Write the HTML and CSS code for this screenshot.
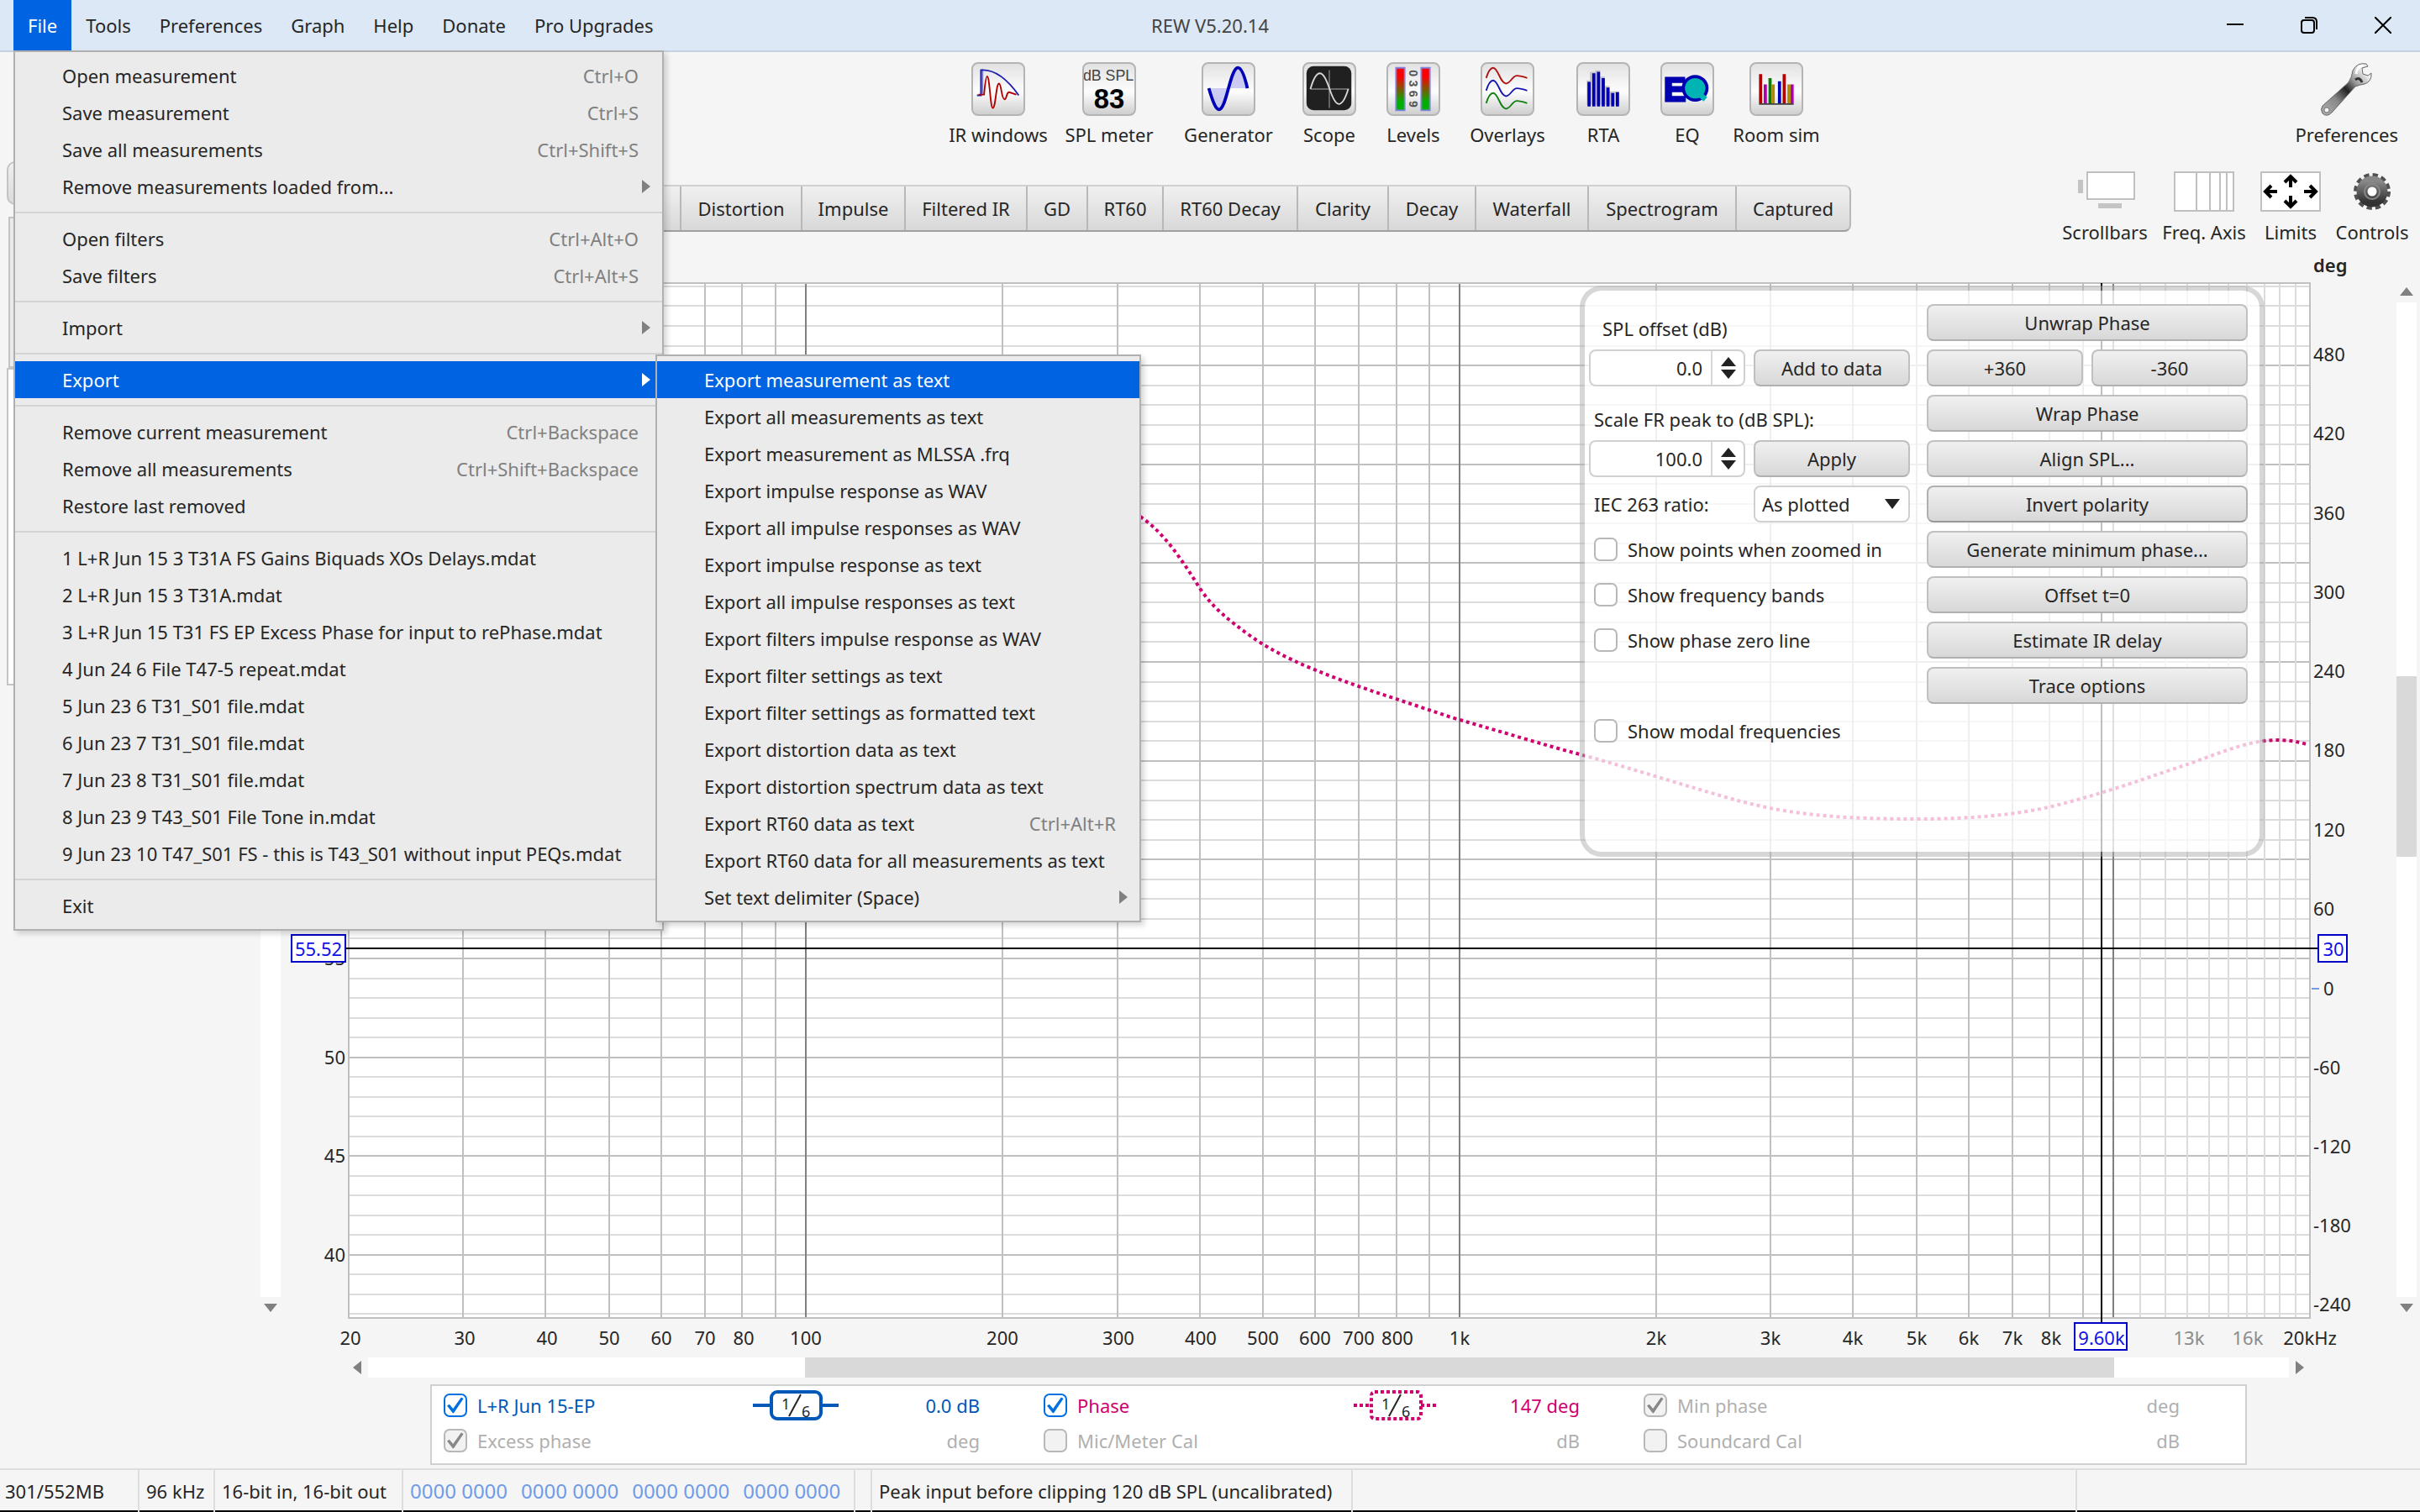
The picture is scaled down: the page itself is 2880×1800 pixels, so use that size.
FILE: index.html
```html
<!DOCTYPE html>
<html lang="en">
<head>
<meta charset="utf-8">
<title>REW V5.20.14</title>
<link rel="stylesheet" href="styles.css">
</head>
<body>
<header class="titlebar">
  <nav class="menubar">
    <div class="menu-host">
      <button class="menubar-item is-open">File</button>
      <ul class="menu">
        <li><button class="menu-item">Open measurement<kbd>Ctrl+O</kbd></button></li>
        <li><button class="menu-item">Save measurement<kbd>Ctrl+S</kbd></button></li>
        <li><button class="menu-item">Save all measurements<kbd>Ctrl+Shift+S</kbd></button></li>
        <li><button class="menu-item has-sub">Remove measurements loaded from...</button></li>
        <li class="separator"></li>
        <li><button class="menu-item">Open filters<kbd>Ctrl+Alt+O</kbd></button></li>
        <li><button class="menu-item">Save filters<kbd>Ctrl+Alt+S</kbd></button></li>
        <li class="separator"></li>
        <li><button class="menu-item has-sub">Import</button></li>
        <li class="separator"></li>
        <li class="sub-host">
          <button class="menu-item has-sub is-active">Export</button>
          <ul class="menu submenu">
            <li><button class="menu-item is-active">Export measurement as text</button></li>
            <li><button class="menu-item">Export all measurements as text</button></li>
            <li><button class="menu-item">Export measurement as MLSSA .frq</button></li>
            <li><button class="menu-item">Export impulse response as WAV</button></li>
            <li><button class="menu-item">Export all impulse responses as WAV</button></li>
            <li><button class="menu-item">Export impulse response as text</button></li>
            <li><button class="menu-item">Export all impulse responses as text</button></li>
            <li><button class="menu-item">Export filters impulse response as WAV</button></li>
            <li><button class="menu-item">Export filter settings as text</button></li>
            <li><button class="menu-item">Export filter settings as formatted text</button></li>
            <li><button class="menu-item">Export distortion data as text</button></li>
            <li><button class="menu-item">Export distortion spectrum data as text</button></li>
            <li><button class="menu-item">Export RT60 data as text<kbd>Ctrl+Alt+R</kbd></button></li>
            <li><button class="menu-item">Export RT60 data for all measurements as text</button></li>
            <li><button class="menu-item has-sub">Set text delimiter (Space)</button></li>
          </ul>
        </li>
        <li class="separator"></li>
        <li><button class="menu-item">Remove current measurement<kbd>Ctrl+Backspace</kbd></button></li>
        <li><button class="menu-item">Remove all measurements<kbd>Ctrl+Shift+Backspace</kbd></button></li>
        <li><button class="menu-item">Restore last removed</button></li>
        <li class="separator"></li>
        <li><button class="menu-item">1 L+R Jun 15 3 T31A FS Gains Biquads XOs Delays.mdat</button></li>
        <li><button class="menu-item">2 L+R Jun 15 3 T31A.mdat</button></li>
        <li><button class="menu-item">3 L+R Jun 15 T31 FS EP Excess Phase for input to rePhase.mdat</button></li>
        <li><button class="menu-item">4 Jun 24 6 File T47-5 repeat.mdat</button></li>
        <li><button class="menu-item">5 Jun 23 6 T31_S01 file.mdat</button></li>
        <li><button class="menu-item">6 Jun 23 7 T31_S01 file.mdat</button></li>
        <li><button class="menu-item">7 Jun 23 8 T31_S01 file.mdat</button></li>
        <li><button class="menu-item">8 Jun 23 9 T43_S01 File Tone in.mdat</button></li>
        <li><button class="menu-item">9 Jun 23 10 T47_S01 FS - this is T43_S01 without input PEQs.mdat</button></li>
        <li class="separator"></li>
        <li><button class="menu-item">Exit</button></li>
      </ul>
    </div>
    <button class="menubar-item">Tools</button>
    <button class="menubar-item">Preferences</button>
    <button class="menubar-item">Graph</button>
    <button class="menubar-item">Help</button>
    <button class="menubar-item">Donate</button>
    <button class="menubar-item">Pro Upgrades</button>
  </nav>
  <h1 class="window-title">REW V5.20.14</h1>
  <div class="window-controls">
    <button aria-label="Minimize"><svg width="20" height="20" viewBox="0 0 20 20"><path d="M0 9H20" stroke="#000" stroke-width="2"/></svg></button>
    <button aria-label="Restore"><svg width="20" height="20" viewBox="0 0 20 20" fill="none" stroke="#000" stroke-width="2"><rect x="1" y="4" width="15" height="15" rx="3"/><path d="M5 1H14Q19 1 19 6V15"/></svg></button>
    <button aria-label="Close"><svg width="20" height="20" viewBox="0 0 20 20"><path d="M0 0L20 20M20 0L0 20" stroke="#000" stroke-width="2"/></svg></button>
  </div>
</header>

<div class="toolbar">
  <div class="tools">
    <button class="tool"><svg class="tile" viewBox="0 0 64 64"><path d="M10 38V7H13V38Z" fill="#8080d8"/><path d="M5 40H10V8Q34 6 58 40" fill="none" stroke="#2020b0" stroke-width="2"/><path d="M7 39H14Q16 16 18 16C21 16 22 56 25 56C29 56 29 25 33 25C36 25 36 45 40 45C43 45 42 36 46 36Q49 37 55 39" fill="none" stroke="#b00000" stroke-width="2"/></svg>IR windows</button>
    <button class="tool"><svg class="tile" viewBox="0 0 64 64"><text x="31" y="21" class="tile-small">dB SPL</text><text x="32" y="57" class="tile-big">83</text></svg>SPL meter</button>
    <button class="tool"><svg class="tile" viewBox="0 0 64 64"><path d="M7 31C12 48 16 58 20 58C25 58 29 42 32 31ZM32 31C35 20 39 5 44 5C49 5 53 18 56 31Z" fill="#c0c0f0" opacity=".8"/><path d="M7 31C12 48 16 58 20 58C25 58 29 42 32 31C35 20 39 5 44 5C49 5 53 18 56 31" fill="none" stroke="#0000b8" stroke-width="4"/></svg>Generator</button>
    <button class="tool"><svg class="tile" viewBox="0 0 64 64"><rect x="3" y="3" width="57" height="56" rx="9" fill="#202020"/><path d="M32 8V56M8 32H57" stroke="#686868" stroke-width="2"/><path d="M8 32C12 18 16 12 20 12C25 12 29 22 32 31C36 43 40 51 44 51C49 51 53 42 56 32" fill="none" stroke="#d8d8d8" stroke-width="2"/></svg>Scope</button>
    <button class="tool"><svg class="tile" viewBox="0 0 64 64"><defs><linearGradient id="level" x1="0" y1="0" x2="0" y2="1"><stop offset=".2" stop-color="#f00"/><stop offset=".8" stop-color="#00b000"/></linearGradient></defs><path d="M10 5H21V59H10ZM42 5H53V59H42Z" fill="url(#level)" stroke="#8080e0" stroke-width="2"/><g class="tile-digit"><text transform="translate(27 12) rotate(90)">0</text><text transform="translate(27 25) rotate(90)">3</text><text transform="translate(27 38) rotate(90)">6</text><text transform="translate(27 51) rotate(90)">9</text></g></svg>Levels</button>
    <button class="tool"><svg class="tile" viewBox="0 0 64 64" fill="none" stroke-width="2"><path d="M5 18C8 8 11 5 14 5C20 5 23 25 30 25C36 25 38 15 44 15Q49 15 57 18" stroke="#b01010"/><path d="M5 34C8 24 11 21 14 21C20 21 23 41 30 41C36 41 38 31 44 31Q49 31 57 34" stroke="#1818b0"/><path d="M5 50C8 40 11 37 14 37C20 37 23 57 30 57C36 57 38 47 44 47Q49 47 57 50" stroke="#108010"/></svg>Overlays</button>
    <button class="tool"><svg class="tile" viewBox="0 0 64 64"><path d="M11 21h4V10h7V8h6v8h6v12h6v7h12v17H11Z" fill="#c4c4cc"/><path d="M12 23h4v31h-4zM18 12h4v42h-4zM24 10h4v44h-4zM30 18h4v36h-4zM36 30h4v24h-4zM42 37h4v17h-4zM48 36h4v18h-4z" fill="#0000b0"/></svg>RTA</button>
    <button class="tool"><svg class="tile" viewBox="0 0 64 64"><text x="2" y="47" class="tile-eq">E</text><circle cx="42" cy="31" r="15" fill="#00b4b4" stroke="#0000b0" stroke-width="4"/><path d="M46 37L55 45" stroke="#00b4b4" stroke-width="7"/></svg>EQ</button>
    <button class="tool"><svg class="tile" viewBox="0 0 64 64"><path d="M10 13h4v37h-4zM40 13h4v37h-4z" fill="#b00000"/><path d="M16 26h4v24h-4zM50 26h4v24h-4z" fill="#b000b0"/><path d="M22 18h4v32h-4z" fill="#008000"/><path d="M26 26h4v24h-4zM46 26h4v24h-4z" fill="#b08800"/><path d="M34 22h4v28h-4z" fill="#0000b0"/><path d="M10 50h44v2H10z" fill="#404040"/></svg>Room sim</button>
  </div>
  <button class="tool tool-prefs"><svg width="64" height="64" viewBox="0 0 64 64"><defs><linearGradient id="steel" x1="0" y1="1" x2="1" y2="0"><stop offset="0" stop-color="#b0b0b0"/><stop offset=".3" stop-color="#888"/><stop offset=".5" stop-color="#222"/><stop offset=".66" stop-color="#999"/><stop offset=".85" stop-color="#eee"/></linearGradient></defs><path d="M3 52L34 24Q38 18 39 10Q44 0 55 2L57 5L50 7L51 14L57 16L61 13Q62 23 53 26Q47 27 42 29L14 60Q8 66 3 61Q0 56 3 52Z" fill="url(#steel)" stroke="#666"/><path d="M42 21Q47 17 50 24" fill="none" stroke="#333" stroke-width="3"/><path d="M43 14Q44 5 51 4" fill="none" stroke="#fff" stroke-width="3"/><circle cx="8" cy="57" r="3" fill="#f5f5f5" stroke="#777"/></svg>Preferences</button>
</div>

<main class="workspace">
  <aside class="sidebar">
    <button class="side-button" aria-label="Collapse"></button>
    <div class="side-card"></div>
    <div class="side-list"></div>
  </aside>
  <section class="graph-pane">
    <div class="tab-row">
      <div class="tabs">
        <button aria-label="Measured"></button><button>Distortion</button><button>Impulse</button><button>Filtered IR</button><button>GD</button><button>RT60</button><button>RT60 Decay</button><button>Clarity</button><button>Decay</button><button>Waterfall</button><button>Spectrogram</button><button>Captured</button>
      </div>
      <div class="graph-tools">
        <button class="tool"><svg width="72" height="48" viewBox="0 0 72 48"><path d="M4 10h6v16H4zM28 38h28v6H28z" fill="#c4c4c4"/><rect x="15" y="1" width="56" height="32" fill="#fff" stroke="#c0c0c0" stroke-width="2"/></svg>Scrollbars</button>
        <button class="tool"><svg width="72" height="48" viewBox="0 0 72 48"><path d="M1 1H71V47H1ZM27 1V47M43 1V47M55 1V47M63 1V47" fill="#fff" stroke="#c0c0c0" stroke-width="2"/></svg>Freq. Axis</button>
        <button class="tool"><svg width="72" height="48" viewBox="0 0 72 48"><path d="M1 1H71V47H1Z" fill="#fff" stroke="#c0c0c0" stroke-width="2"/><path d="M36 19V7M29 13L36 6L43 13M36 29V41M29 35L36 42L43 35M20 24H7M13 17L6 24L13 31M52 24H65M59 17L66 24L59 31" fill="none" stroke="#000" stroke-width="4"/></svg>Limits</button>
        <button class="tool"><svg width="48" height="48" viewBox="0 0 48 48"><defs><linearGradient id="gear" x1="0" y1="0" x2="0" y2="1"><stop offset="0" stop-color="#888"/><stop offset="1" stop-color="#333"/></linearGradient></defs><circle cx="24" cy="24" r="19" fill="none" stroke="#505050" stroke-width="6" stroke-dasharray="6 3.95"/><circle cx="24" cy="24" r="12" fill="none" stroke="url(#gear)" stroke-width="13"/><circle cx="24" cy="24" r="9" fill="none" stroke="#888" stroke-width="2"/><circle cx="24" cy="24" r="5" fill="#fff"/></svg>Controls</button>
      </div>
    </div>

    <div class="graph-row">
      <div class="scroll-v"><i class="arrow up"></i><div class="track"></div><i class="arrow down"></i></div>
      <div class="plot">
        <svg class="chart" viewBox="334 290 2518 1320" role="img" aria-label="SPL and phase against frequency">
          <rect x="415" y="337" width="2334" height="1232" fill="#fff"/>
          <path class="grid-minor" d="M415 341H2749M415 364H2749M415 388H2749M415 412H2749M415 459H2749M415 482H2749M415 506H2749M415 529H2749M415 576H2749M415 600H2749M415 623H2749M415 647H2749M415 694H2749M415 717H2749M415 741H2749M415 764H2749M415 812H2749M415 835H2749M415 859H2749M415 882H2749M415 929H2749M415 953H2749M415 976H2749M415 1000H2749M415 1047H2749M415 1070H2749M415 1094H2749M415 1117H2749M415 1165H2749M415 1188H2749M415 1212H2749M415 1235H2749M415 1282H2749M415 1306H2749M415 1329H2749M415 1353H2749M415 1400H2749M415 1423H2749M415 1447H2749M415 1470H2749M415 1517H2749M415 1541H2749M415 1564H2749"/>
          <path class="grid-major" d="M415 435H2749M415 553H2749M415 670H2749M415 788H2749M415 906H2749M415 1023H2749M415 1141H2749M415 1259H2749M415 1376H2749M415 1494H2749"/>
          <path class="grid-minor" d="M2547 337V1569M2577 337V1569M2603 337V1569M2629 337V1569M2652 337V1569M2674 337V1569M2695 337V1569M2713 337V1569M2732 337V1569"/>
          <path class="grid-major" d="M551 337V1569M649 337V1569M725 337V1569M787 337V1569M839 337V1569M883 337V1569M923 337V1569M1193 337V1569M1330 337V1569M1428 337V1569M1503 337V1569M1565 337V1569M1617 337V1569M1662 337V1569M1701 337V1569M1971 337V1569M2107 337V1569M2205 337V1569M2281 337V1569M2343 337V1569M2395 337V1569M2439 337V1569M2479 337V1569"/>
          <path class="grid-decade" d="M959 337V1569M1737 337V1569M2515 337V1569"/>
          <rect class="frame" x="415" y="337" width="2334" height="1232"/>
          <path class="phase" d="M1357 615C1385 634 1405 664 1429 702C1444 724 1462 738 1488 757C1545 798 1640 824 1727 854C1790 872 1835 886 1880 898C1940 914 2010 937 2068 953C2115 965 2160 975 2282 975C2345 975 2400 970 2442 960C2510 943 2560 924 2606 909C2650 893 2680 881 2710 881Q2728 881 2745 886"/>
          <path class="cursor" d="M412 1129H2758M2501 337V1574"/>
          <g class="axis axis-left">
            <text x="411" y="1149">55</text><text x="411" y="1267">50</text><text x="411" y="1384">45</text><text x="411" y="1502">40</text>
          </g>
          <g class="axis axis-right">
            <text x="2753" y="324" class="unit">deg</text>
            <text x="2753" y="430">480</text><text x="2753" y="524">420</text><text x="2753" y="619">360</text><text x="2753" y="713">300</text><text x="2753" y="807">240</text><text x="2753" y="901">180</text><text x="2753" y="996">120</text><text x="2753" y="1090">60</text><text x="2765" y="1185">0</text><text x="2753" y="1279">-60</text><text x="2753" y="1373">-120</text><text x="2753" y="1467">-180</text><text x="2753" y="1561">-240</text>
          </g>
          <path d="M2751 1177H2760" stroke="#6f9be8" stroke-width="2"/>
          <g class="axis axis-bottom">
            <text x="417" y="1601">20</text><text x="553" y="1601">30</text><text x="651" y="1601">40</text><text x="725" y="1601">50</text><text x="787" y="1601">60</text><text x="839" y="1601">70</text><text x="885" y="1601">80</text><text x="959" y="1601">100</text><text x="1193" y="1601">200</text><text x="1331" y="1601">300</text><text x="1429" y="1601">400</text><text x="1503" y="1601">500</text><text x="1565" y="1601">600</text><text x="1617" y="1601">700</text><text x="1663" y="1601">800</text><text x="1737" y="1601">1k</text><text x="1971" y="1601">2k</text><text x="2107" y="1601">3k</text><text x="2205" y="1601">4k</text><text x="2281" y="1601">5k</text><text x="2343" y="1601">6k</text><text x="2395" y="1601">7k</text><text x="2441" y="1601">8k</text><text x="2605" y="1601" class="dim">13k</text><text x="2675" y="1601" class="dim">16k</text><text x="2749" y="1601">20kHz</text>
          </g>
          <g class="readout">
            <rect x="347" y="1113" width="64" height="32"/><text x="379" y="1138">55.52</text>
            <rect x="2759" y="1113" width="34" height="32"/><text x="2777" y="1138">30</text>
            <rect x="2469" y="1575" width="62" height="32"/><text x="2501" y="1601">9.60k</text>
          </g>
        </svg>
        <form class="controls">
          <label class="cell c1 w2 note" for="offset">SPL offset (dB)</label>
          <button type="button" class="push c3 w2 r1">Unwrap Phase</button>
          <div class="spinner c1 r2"><input id="offset" type="text" value="0.0"><button type="button" aria-label="Step"><svg width="20" height="28" viewBox="0 0 20 28"><path d="M1 12L10 1L19 12ZM1 16L10 27L19 16Z" fill="#222"/></svg></button></div>
          <button type="button" class="push c2 r2">Add to data</button>
          <button type="button" class="push c3 r2">+360</button>
          <button type="button" class="push c4 r2">-360</button>
          <label class="cell c1 w2 r3 low" for="peak">Scale FR peak to (dB SPL):</label>
          <button type="button" class="push c3 w2 r3">Wrap Phase</button>
          <div class="spinner c1 r4"><input id="peak" type="text" value="100.0"><button type="button" aria-label="Step"><svg width="20" height="28" viewBox="0 0 20 28"><path d="M1 12L10 1L19 12ZM1 16L10 27L19 16Z" fill="#222"/></svg></button></div>
          <button type="button" class="push c2 r4">Apply</button>
          <button type="button" class="push c3 w2 r4">Align SPL...</button>
          <label class="cell c1 r5" for="ratio">IEC 263 ratio:</label>
          <div class="select c2 r5"><select id="ratio"><option>As plotted</option></select></div>
          <button type="button" class="push is-default c3 w2 r5">Invert polarity</button>
          <label class="cell c1 w2 r6"><input type="checkbox">Show points when zoomed in</label>
          <button type="button" class="push c3 w2 r6">Generate minimum phase...</button>
          <label class="cell c1 w2 r7"><input type="checkbox">Show frequency bands</label>
          <button type="button" class="push c3 w2 r7">Offset t=0</button>
          <label class="cell c1 w2 r8"><input type="checkbox">Show phase zero line</label>
          <button type="button" class="push c3 w2 r8">Estimate IR delay</button>
          <button type="button" class="push c3 w2 r9">Trace options</button>
          <label class="cell c1 w2 r10"><input type="checkbox">Show modal frequencies</label>
        </form>
      </div>
      <div class="scroll-v"><i class="arrow up"></i><div class="track"><div class="thumb"></div></div><i class="arrow down"></i></div>
    </div>

    <div class="scroll-h"><i class="arrow left"></i><div class="track"><div class="thumb"></div></div><i class="arrow right"></i></div>

    <div class="legend">
      <div class="trace spl"><label><input type="checkbox" checked>L+R Jun 15-EP</label><svg width="102" height="38" viewBox="0 0 102 38"><path d="M0 19H21M81 19H102" stroke-width="4"/><rect x="22" y="3" width="59" height="32" rx="7" stroke-width="4"/><path d="M43 32L57 6" class="slash"/><text x="34" y="24">1</text><text x="58" y="33">6</text></svg><output>0.0 dB</output></div>
      <div class="trace ph"><label><input type="checkbox" checked>Phase</label><svg width="102" height="38" viewBox="0 0 102 38"><path d="M1 19H21M81 19H102" stroke-width="4" stroke-dasharray="4 3"/><rect x="22" y="3" width="59" height="32" rx="4" stroke-width="4" stroke-dasharray="4 3"/><path d="M43 32L57 6" class="slash"/><text x="34" y="24">1</text><text x="58" y="33">6</text></svg><output>147 deg</output></div>
      <div class="trace off"><label><input type="checkbox" checked disabled>Min phase</label><output>deg</output></div>
      <div class="trace off"><label><input type="checkbox" checked disabled>Excess phase</label><output>deg</output></div>
      <div class="trace off"><label><input type="checkbox" disabled>Mic/Meter Cal</label><output>dB</output></div>
      <div class="trace off"><label><input type="checkbox" disabled>Soundcard Cal</label><output>dB</output></div>
    </div>
  </section>
</main>

<footer class="status">
  <span>301/552MB</span>
  <span>96 kHz</span>
  <span>16-bit in, 16-bit out</span>
  <span class="bits"><b>0000 0000</b><b>0000 0000</b><b>0000 0000</b><b>0000 0000</b></span>
  <span></span>
  <span>Peak input before clipping 120 dB SPL (uncalibrated)</span>
  <span></span>
  <span></span>
</footer>
</body>
</html>
```
FILE: styles.css
```css
* { box-sizing: border-box; }

body {
  margin: 0;
  min-height: 100vh;
  display: flex;
  flex-direction: column;
  background: #f5f5f5;
  color: #262626;
  font: 22px/28px "Noto Sans", "Open Sans", sans-serif;
}

button, input, select {
  margin: 0;
  padding: 0;
  border: 0;
  background: none;
  color: inherit;
  font: inherit;
}

svg { display: block; flex: none; }

/* Title bar and menus */
.titlebar {
  display: grid;
  grid-template-columns: 1fr auto 1fr;
  height: 62px;
  background: #dce8f6;
  border-bottom: 2px solid #c5d2e2;
}
.menubar { display: flex; padding-left: 16px; white-space: nowrap; }
.menu-host { position: relative; display: flex; }
.menubar-item { padding: 0 17px; }
.menubar-item.is-open { background: #0063e1; color: #fff; }
.window-title { margin: 0; font-size: 22px; font-weight: 400; line-height: 60px; color: #444; }
.window-controls { display: flex; justify-content: flex-end; }
.window-controls button { display: flex; align-items: center; justify-content: center; width: 88px; }

.menu {
  position: absolute;
  top: 60px;
  left: 0;
  z-index: 5;
  width: 774px;
  margin: 0;
  padding: 6px 0;
  list-style: none;
  background: #ebebeb;
  border: 2px solid #b0b0b0;
  box-shadow: 4px 4px 6px rgba(0, 0, 0, .15);
}
.submenu { top: -8px; left: 762px; width: 578px; }
.sub-host { position: relative; }
.menu-item {
  display: flex;
  align-items: center;
  justify-content: space-between;
  width: 100%;
  height: 44px;
  padding: 0 28px 0 56px;
  text-align: left;
  white-space: nowrap;
}
.menu-item kbd { font: inherit; color: #808080; }
.menu-item.has-sub { padding-right: 14px; }
.menu-item.has-sub::after {
  content: "";
  border-left: 10px solid #808080;
  border-top: 8px solid transparent;
  border-bottom: 8px solid transparent;
}
.menu-item.is-active { background: #0063e1; color: #fff; }
.menu-item.is-active.has-sub::after { border-left-color: #fff; }
.separator { height: 2px; margin: 8px 0; background: #d4d4d4; }

/* Toolbar */
.toolbar {
  display: grid;
  grid-template-columns: 1125fr auto 705fr;
  height: 128px;
  padding-top: 12px;
}
.tools {
  grid-column: 2;
  display: grid;
  grid-template-columns: 126px 138px 146px 94px 106px 118px 110px 90px 122px;
}
.tool {
  display: flex;
  flex-direction: column;
  align-items: center;
  gap: 8px;
  white-space: nowrap;
}
.tool-prefs { grid-column: 3; justify-self: end; margin-right: 26px; }
.tile {
  width: 64px;
  height: 64px;
  border: 2px solid #b4b4b4;
  border-radius: 8px;
  background: linear-gradient(#e2e2e2, #fdfdfd 55%, #cfcfcf);
}
.tile-small { font: 19px "Liberation Sans", sans-serif; text-anchor: middle; fill: #444; }
.tile-big { font: bold 35px "Liberation Sans", sans-serif; text-anchor: middle; fill: #000; }
.tile-digit { font: bold 15px "Liberation Sans", sans-serif; text-anchor: middle; fill: #555; }
.tile-eq { font: bold 42px "Liberation Sans", sans-serif; fill: #0000b0; stroke: #0000b0; stroke-width: 3; }

/* Workspace */
.workspace { flex: 1; display: grid; grid-template-columns: 310px minmax(0, 1fr); }
.sidebar { display: flex; flex-direction: column; padding: 2px 8px 0; }
.side-button { height: 52px; border: 2px solid #c4c4c4; border-radius: 10px; background: linear-gradient(#f0f0f0, #dadada); }
.side-card { height: 180px; margin: 14px 2px 0; border: 2px solid #c4c4c4; background: #ebebeb; }
.side-list { height: 378px; border: 2px solid #c4c4c4; background: #fff; }

.tab-row { display: flex; justify-content: space-between; height: 100px; padding: 14px 6px 0 26px; }
.tabs {
  display: grid;
  grid-template-columns: 471px 144px 123px 145px 72px 90px 160px 108px 104px 134px 176px 136px;
  height: 56px;
  margin-top: 16px;
  border: 2px solid #b8b8b8;
  border-top-color: #d0d0d0;
  border-bottom-color: #a0a0a0;
  border-radius: 8px;
  background: linear-gradient(#f0f0f0, #d8d8d8);
}
.tabs button { white-space: nowrap; }
.tabs button + button { border-left: 2px solid #b8b8b8; }
.graph-tools { display: grid; grid-template-columns: 122px 114px 92px 102px; }
.graph-tools .tool { gap: 10px; }

.graph-row { display: grid; grid-template-columns: 24px minmax(0, 1fr) 24px; padding-right: 4px; }
.scroll-v { display: flex; flex-direction: column; align-items: center; gap: 8px; padding: 52px 0 48px; }
.track { background: #fff; }
.scroll-v .track { flex: 1; width: 24px; padding-top: 445px; }
.scroll-v .thumb { height: 215px; background: #d9d9d9; }
.arrow { border: 8px solid transparent; }
.arrow.up { border-top: 0; border-bottom: 10px solid #808080; }
.arrow.down { border-bottom: 0; border-top: 10px solid #808080; }
.arrow.left { border-left: 0; border-right: 10px solid #808080; }
.arrow.right { border-right: 0; border-left: 10px solid #808080; }
.scroll-h { display: flex; align-items: center; gap: 8px; margin: 6px 138px 0 110px; }
.scroll-h .track {
  flex: 1;
  display: grid;
  grid-template-columns: 520fr 1558fr 208fr;
  height: 24px;
}
.scroll-h .thumb { grid-column: 2; background: #d9d9d9; }

/* Plot */
.plot { position: relative; }
.chart { width: 100%; height: auto; }
.chart path, .frame { fill: none; stroke-width: 2; }
.grid-minor { stroke: #dcdcdc; }
.grid-major, .frame { stroke: #c0c0c0; }
.grid-decade { stroke: #808080; }
.chart .phase { stroke: #d0006f; stroke-width: 4; stroke-dasharray: 4 4; }
.cursor { stroke: #000; }
.axis text { font-size: 22px; fill: #262626; }
.axis-left { text-anchor: end; }
.axis-bottom, .readout { text-anchor: middle; }
.axis .dim { fill: #8c8c8c; }
.axis .unit { font-weight: 600; }
.readout rect { fill: #fff; stroke: #0000c8; stroke-width: 2; }
.readout text { font-size: 22px; fill: #1010e8; }

.controls {
  position: absolute;
  top: 50px;
  right: 157px;
  display: grid;
  grid-template-columns: 186px 186px 0 186px 186px;
  grid-template-rows: repeat(12, 44px);
  gap: 10px;
  padding: 16px 14px 14px 5px;
  border: 6px solid rgba(176, 176, 176, .5);
  border-radius: 26px;
  background: rgba(255, 255, 255, .75);
  background-clip: padding-box;
}
.c1 { grid-column: 1; } .c2 { grid-column: 2; } .c3 { grid-column: 4; } .c4 { grid-column: 5; }
.c1.w2 { grid-column: 1 / span 2; } .c3.w2 { grid-column: 4 / span 2; }
.note, .r1 { grid-row: 1; } .r2 { grid-row: 2; } .r3 { grid-row: 3; } .r4 { grid-row: 4; } .r5 { grid-row: 5; }
.r6 { grid-row: 6; } .r7 { grid-row: 7; } .r8 { grid-row: 8; } .r9 { grid-row: 9; } .r10 { grid-row: 10; }
.cell { display: flex; align-items: center; padding-left: 6px; white-space: nowrap; }
.note { padding: 14px 0 0 16px; }
.low { padding-top: 14px; }
.push {
  border: 2px solid #c0c0c0;
  border-bottom-color: #b0b0b0;
  border-radius: 8px;
  background: linear-gradient(#f0f0f0, #d8d8d8);
  white-space: nowrap;
}
.push.is-default { border-color: #b0b0b0; border-bottom-color: #989898; }
.spinner { display: flex; border: 2px solid #d0d0d0; border-radius: 8px; background: #fff; }
.spinner input { flex: 1; min-width: 0; padding-right: 10px; text-align: right; }
.spinner button { display: flex; align-items: center; justify-content: center; width: 39px; border-left: 2px solid #d8d8d8; }
.select { display: flex; align-items: center; padding-right: 10px; border: 2px solid #d0d0d0; border-radius: 8px; background: #fff; }
.select select { flex: 1; min-width: 0; padding-left: 8px; appearance: none; }
.select::after { content: ""; border: 9px solid transparent; border-top: 12px solid #222; border-bottom: 0; }

input[type="checkbox"] {
  appearance: none;
  display: flex;
  align-items: center;
  justify-content: center;
  width: 28px;
  height: 28px;
  margin-right: 12px;
  border: 2px solid #b8b8b8;
  border-radius: 7px;
  background: #fff;
}
input[type="checkbox"]:checked { border-color: #0070e0; }
input[type="checkbox"]:disabled { border-color: #b8b8b8; background: #f2f2f2; }
input[type="checkbox"]:checked::after {
  content: "";
  width: 20px;
  height: 20px;
  background: #0070e0;
  clip-path: polygon(0 52%, 14% 44%, 36% 70%, 84% 2%, 98% 10%, 40% 96%, 34% 96%);
}
input[type="checkbox"]:disabled::after { background: #888; }

/* Legend */
.legend {
  display: grid;
  grid-template-columns: repeat(3, 1fr);
  grid-auto-rows: 42px;
  height: 96px;
  margin: 8px 206px 4px 202px;
  padding: 2px 2px 0 14px;
  border: 2px solid #d0d0d0;
  background: #fff;
}
.trace { display: grid; grid-template-columns: 368px 102px 1fr; align-items: center; padding-right: 76px; }
.trace label { display: flex; align-items: center; grid-column: 1; }
.trace svg { fill: none; stroke: currentColor; }
.trace text { font-size: 18px; stroke: none; fill: #262626; }
.trace .slash { stroke: #262626; stroke-width: 2; }
.trace output { grid-column: 3; text-align: right; }
.spl { color: #0058b8; }
.ph { color: #d0006f; }
.off { color: #b0b0b0; }

/* Status bar */
.status {
  display: grid;
  grid-template-columns: 166px 90px 224px 538px 20px 572px 862px 1fr;
  height: 52px;
  border-top: 2px solid #dedede;
  border-bottom: 2px solid #000;
  line-height: 50px;
  white-space: nowrap;
}
.status span { padding-left: 8px; border-right: 2px solid #dedede; }
.status span:first-child { padding-left: 6px; }
.status span:last-child { border-right: 0; }
.bits { display: flex; gap: 16px; font-size: 24px; color: #6f9be8; }
.bits b { font-weight: 400; }
```
